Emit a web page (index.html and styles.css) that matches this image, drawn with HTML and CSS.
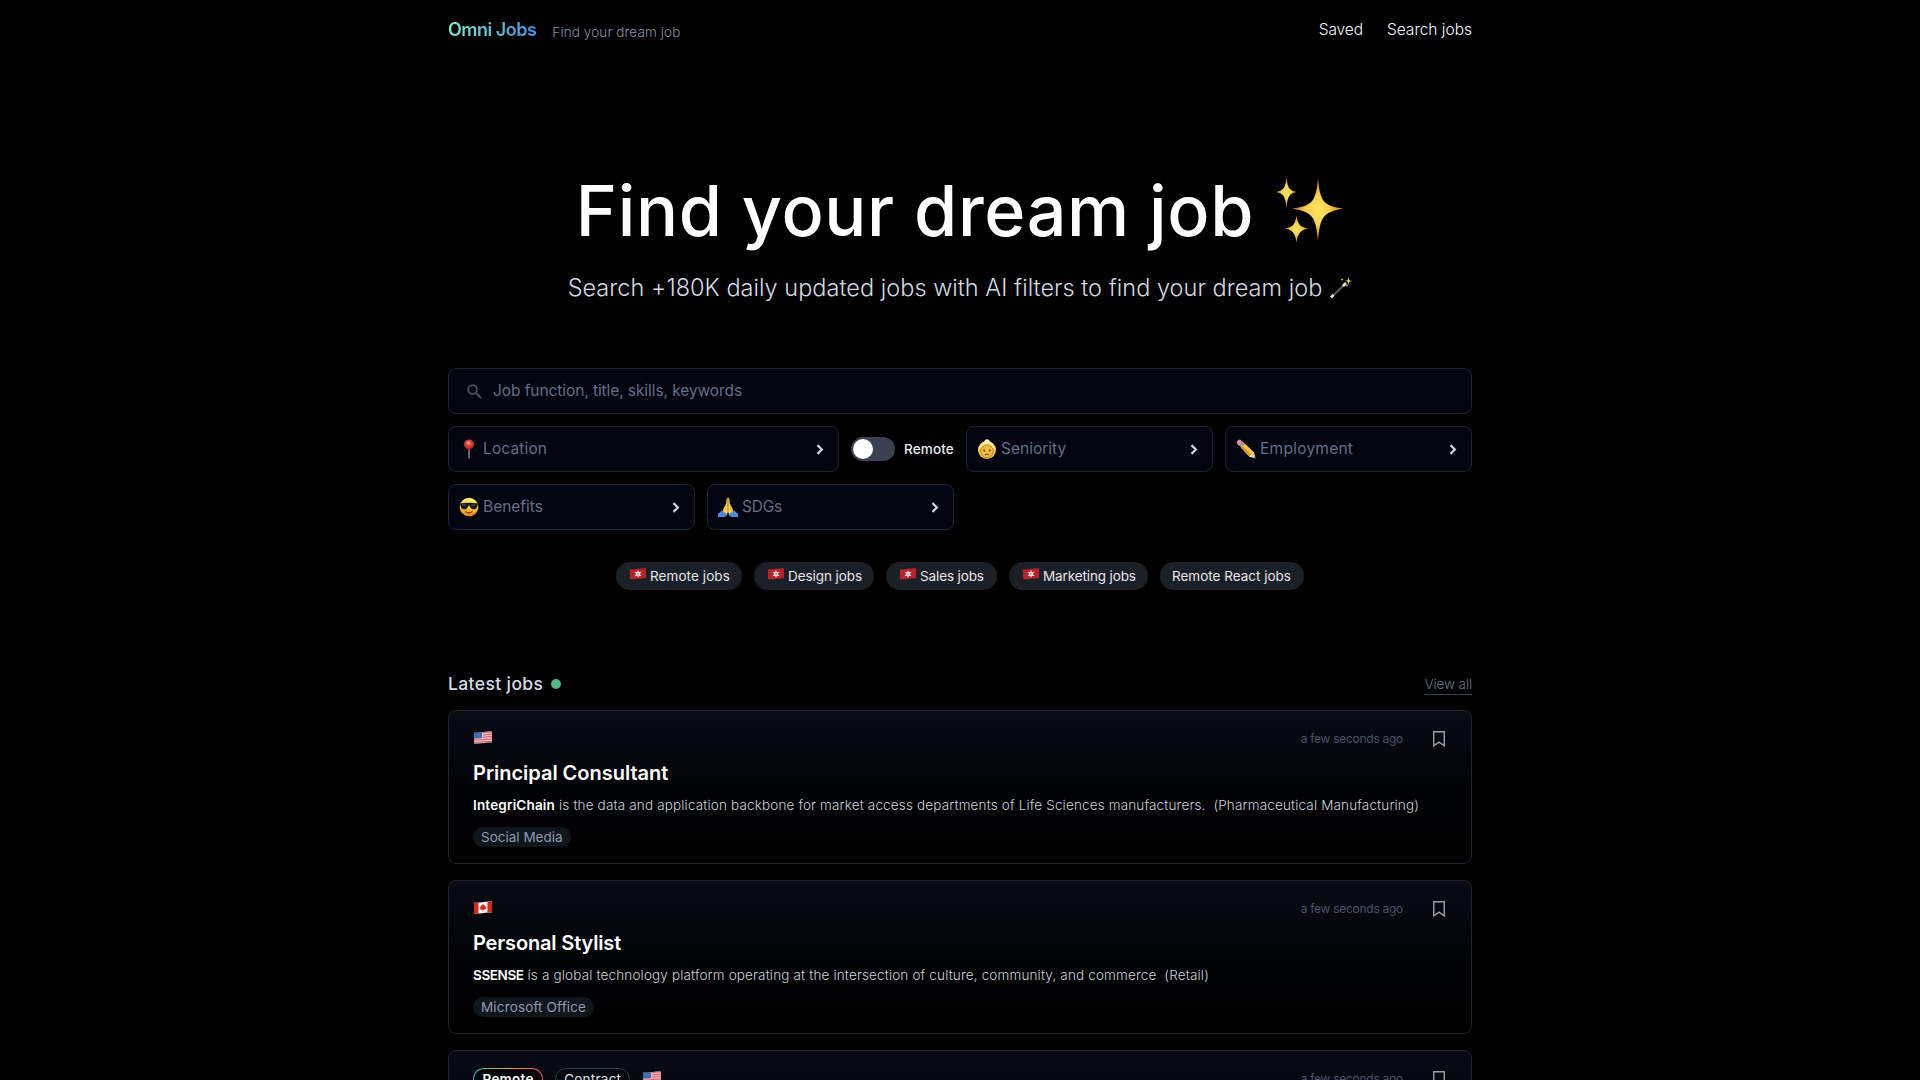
FILE: index.html
```
<!DOCTYPE html>
<html lang="en">
<head>
<meta charset="utf-8">
<title>Omni Jobs</title>
<link rel="stylesheet" href="styles.css">
</head>
<body>
<svg class="defs" width="0" height="0" aria-hidden="true">
  <defs>
    <radialGradient id="gold"><stop offset="0" stop-color="#ffe45c"/><stop offset=".45" stop-color="#f9d253"/><stop offset="1" stop-color="#c9721f"/></radialGradient>
    <linearGradient id="face" x1="0" y1="0" x2="0" y2="1"><stop offset="0" stop-color="#fff06a"/><stop offset=".55" stop-color="#fbc93c"/><stop offset="1" stop-color="#e8801a"/></linearGradient>
    <radialGradient id="pinhead" cx=".45" cy=".35" r=".65"><stop offset="0" stop-color="#ffb3a6"/><stop offset=".35" stop-color="#e2493f"/><stop offset="1" stop-color="#a81f20"/></radialGradient>
    <linearGradient id="hand" x1="0" y1="0" x2="1" y2="0"><stop offset="0" stop-color="#f7b42c"/><stop offset=".5" stop-color="#ffdf66"/><stop offset="1" stop-color="#f2a82b"/></linearGradient>
  </defs>
  <symbol id="chevron" viewBox="0 0 7 10"><path d="M1.2 1l4 4-4 4" fill="none" stroke="#d1d5db" stroke-width="2"/></symbol>
  <symbol id="bookmark" viewBox="0 0 12 16"><path d="M.75.75h10.5v14l-5.25-3.6-5.25 3.6z" fill="none" stroke="#9ca0ad" stroke-width="1.4"/></symbol>
  <symbol id="check" viewBox="0 0 12 10"><path d="M1 5.5l3.3 3L11 1" fill="none" stroke="#03031f" stroke-width="1.4"/></symbol>
  <symbol id="flag-us" viewBox="0 0 18 13">
    <path d="M0 1.500C5 2.400 9 0 18 .5v11C9 11 5 13.400 0 12.500z" fill="#f0b9bd"/>
    <path d="M9 1.700q4-.9 9-.7M9 4.100q4-.9 9-.7M9 6.400q4-.9 9-.7M0 9q4 .3 9-.4t9-.5M0 11.400q4 .3 9-.5t9-.4" fill="none" stroke="#d0606c" stroke-width="1"/>
    <path d="M0 1.500c3 .5 5.500-.1 8-.5v6c-2.500.4-5 .8-8 .5z" fill="#3c68ae"/>
    <path d="M1 3.300h6M1 5.300h6" stroke="#7f9fd0" stroke-width=".5" stroke-dasharray=".7 .7"/>
  </symbol>
  <symbol id="flag-ca" viewBox="0 0 18 13">
    <path d="M0 1.500C5 2.400 9 0 18 .5v11C9 11 5 13.400 0 12.500z" fill="#f4f4f4"/>
    <path d="M0 1.500q2.200.4 4.500.1v11q-2.300.3-4.500-.1zM13.500.5q2-.2 4.500 0v11q-2.500-.2-4.500 0z" fill="#d5291f"/>
    <path d="M9 2.800l.9 1.500 1-.4-.1 1.600 1.600-.2-.6 1.500.5.600-2.500 1.700-.8.100v1.100h-.4V9.200l-2.900-1.300.6-.8-.8-1.400 1.600 0-.2-1.600 1.200.4z" fill="#e0281e"/>
  </symbol>
  <symbol id="flag-hk" viewBox="0 0 16 12">
    <path d="M0 1.300C5 2 9 0 16 .4v10C9 10.100 5 12 0 11.300z" fill="#b8222b"/>
    <path d="M8 1.900l1 2.400 2.600-.5-1.700 2.200 1.700 2-2.600-.3L8 10l-.9-2.200-2.600.4 1.600-2.200-1.600-2 2.500.3z" fill="#fbe5e5"/>
    <circle cx="8" cy="5.900" r=".7" fill="#c9222c"/>
  </symbol>
</svg>

<div class="page">
  <header class="topbar">
    <div class="brand">
      <a class="logo">Omni Jobs</a>
      <span class="tagline">Find your dream job</span>
    </div>
    <nav class="nav"><a class="nav-saved">Saved</a><a>Search jobs</a></nav>
  </header>

  <section class="hero">
    <h1>Find your dream job
      <svg class="sparkles" viewBox="0 0 68 66" width="68" height="66">
        <path d="M42 1C44 24 47 29 67.500 31.500C47 35 44 40 42 64.500C40 40 37 35 16 31.500C37 29 40 24 42 1z" fill="url(#gold)"/>
        <path d="M10.500 0C11.500 10.500 13 13.500 20.500 15C13 16.500 11.500 20 10.500 31C9.500 20 8 16.500 0 15C8 13.500 9.500 10.500 10.500 0z" fill="url(#gold)"/>
        <path d="M20.500 38C21.500 47 23.500 50 32 51.500C23.500 53.500 21.500 57 20.500 66C19.500 57 17.500 53.500 9 51.500C17.500 50 19.500 47 20.500 38z" fill="url(#gold)"/>
      </svg>
    </h1>
    <p>Search +180K daily updated jobs with AI filters to find your dream job
      <svg viewBox="0 0 22 22" width="22" height="22">
        <path d="M1.500 20L15.500 6.500" stroke="#55565c" stroke-width="2.400"/>
        <path d="M.8 20.600l2.800-2.800M13 9l3-3" stroke="#e4e4e6" stroke-width="2.600"/>
        <path d="M18.500 0l.8 3.200 2.700.8-2.700.8-.8 3.200-.8-3.200L15 4l2.700-.8zM12 1l.4 1.200 1.300.4-1.300.4L12 4.200l-.4-1.200-1.300-.4 1.300-.4zM17 7.200l.4 1.100 1.100.4-1.100.4-.4 1.100-.4-1.100-1.100-.4 1.100-.4z" fill="#e3dc6a"/>
      </svg>
    </p>
  </section>

  <form class="filters">
    <div class="field search">
      <svg viewBox="0 0 15 15" width="15" height="15"><circle cx="5.500" cy="5.500" r="4.400" fill="none" stroke="#4b5260" stroke-width="1.700"/><path d="M8.700 8.700l5.300 5.300" stroke="#4b5260" stroke-width="2"/></svg>
      <span>Job function, title, skills, keywords</span>
    </div>
    <div class="location-row">
      <div class="field">
        <svg class="emoji" viewBox="0 0 20 20"><path d="M10 9v10.500" stroke="#9b8a80" stroke-width="1.400"/><circle cx="10" cy="5.500" r="5" fill="url(#pinhead)"/></svg>
        <span class="label-location">Location</span><svg class="chevron"><use href="#chevron"/></svg>
      </div>
      <div class="toggle"><i></i></div>
      <span class="toggle-label">Remote</span>
    </div>
    <div class="field">
      <svg class="emoji" viewBox="0 0 20 20"><circle cx="10" cy="2.800" r="2.600" fill="#fff3b0"/><circle cx="10" cy="11" r="9" fill="#f5c747"/><path d="M1.500 10C3 4 7 2 10 2s7 2 8.500 8c-2-.5-5-4-8.500-4S3.500 9.500 1.500 10z" fill="#fff0a5"/><ellipse cx="10" cy="12.200" rx="6.200" ry="6.500" fill="#f2bf3e" stroke="#b07a1d" stroke-width=".9"/><path d="M6 11q1.200-1 2.400 0M11.600 11q1.200-1 2.400 0" stroke="#775018" stroke-width=".8" fill="none"/><circle cx="7.300" cy="12" r=".8" fill="#4a3010"/><circle cx="12.700" cy="12" r=".8" fill="#4a3010"/><path d="M8 16q2-1.400 4 0" stroke="#6b3c10" stroke-width="1.100" fill="none"/></svg>
      <span>Seniority</span><svg class="chevron"><use href="#chevron"/></svg>
    </div>
    <div class="field">
      <svg class="emoji" viewBox="0 0 20 20"><path d="M.8 4.500Q.6 1 4 .6l3.200 2.600-3.800 3.600z" fill="#e88c94"/><path d="M3.200 6.500L7 3l1.900 1.600-3.900 3.700z" fill="#8fa3b8"/><path d="M4.800 8.300l4.100-3.800 9.300 9-1.200 3.700-3.800.4z" fill="#f6c53c"/><path d="M4.800 8.300l1.600-1.500 9.200 9-.6 1.300-1.800.5z" fill="#e09a25"/><path d="M13 17.500l5-4.300 1.700 6.500z" fill="#eed1a0"/><path d="M17.600 18.900l1.500-1.400.6 2.200z" fill="#333"/></svg>
      <span class="label-employment">Employment</span><svg class="chevron"><use href="#chevron"/></svg>
    </div>
    <div class="field">
      <svg class="emoji" viewBox="0 0 20 20"><circle cx="10" cy="10" r="9.300" fill="url(#face)"/><path d="M1 6.500q9-1.600 18 0l-.4 1.700c-.5 3.300-2 4.200-4 4.200-2.300 0-3.500-1.500-3.900-3.600h-1.400C8.900 10.900 7.700 12.400 5.400 12.400c-2 0-3.500-.9-4-4.200z" fill="#17191d"/><path d="M3 8h3.500M12.500 8H16" stroke="#5a6068" stroke-width="1"/><path d="M6.500 14.500q3.500 2.600 7 0" stroke="#7a3d0c" stroke-width="1.200" fill="none"/></svg>
      <span>Benefits</span><svg class="chevron"><use href="#chevron"/></svg>
    </div>
    <div class="field">
      <svg class="emoji" viewBox="0 0 20 20"><path d="M9.800.3C8.500 1 8.300 4 8.200 6.500L5 12.500 4.500 16l4 2.500L9.900 15zM10.200.3c1.300.7 1.500 3.700 1.600 6.200L15 12.500l.5 3.500-4 2.500L10.100 15z" fill="url(#hand)"/><path d="M10 1v14.500" stroke="#c98520" stroke-width=".7"/><path d="M3.800 13.500l5 3.500-1.500 2.900H0v-3zM16.200 13.500l-5 3.500 1.500 2.900H20v-3z" fill="#4d8ddb"/></svg>
      <span class="label-sdg">SDGs</span><svg class="chevron"><use href="#chevron"/></svg>
    </div>
  </form>

  <div class="chips">
    <a class="chip chip-remote"><svg><use href="#flag-hk"/></svg>Remote jobs</a>
    <a class="chip chip-design"><svg><use href="#flag-hk"/></svg>Design jobs</a>
    <a class="chip chip-sales"><svg><use href="#flag-hk"/></svg>Sales jobs</a>
    <a class="chip chip-marketing"><svg><use href="#flag-hk"/></svg>Marketing jobs</a>
    <a class="chip chip-react">Remote React jobs</a>
  </div>

  <section class="latest">
    <div class="latest-head"><h2>Latest jobs</h2><i class="dot"></i><a>View all</a></div>
    <article class="job">
      <svg class="visited"><use href="#check"/></svg>
      <div class="meta"><svg class="flag"><use href="#flag-us"/></svg><time>a few seconds ago</time><svg class="bookmark"><use href="#bookmark"/></svg></div>
      <h3>Principal Consultant</h3>
      <p><b class="co-integri">IntegriChain</b>is the data and application backbone for market access departments of Life Sciences manufacturers.&nbsp; (Pharmaceutical Manufacturing)</p>
      <span class="tag">Social Media</span>
    </article>
    <article class="job">
      <svg class="visited"><use href="#check"/></svg>
      <div class="meta"><svg class="flag"><use href="#flag-ca"/></svg><time>a few seconds ago</time><svg class="bookmark"><use href="#bookmark"/></svg></div>
      <h3 class="stylist">Personal Stylist</h3>
      <p><b class="co-ssense">SSENSE</b>is a global technology platform operating at the intersection of culture, community, and commerce&nbsp; (Retail)</p>
      <span class="tag tag-office">Microsoft Office</span>
    </article>
    <article class="job">
      <div class="meta"><span class="badge rainbow">Remote</span><span class="badge">Contract</span><svg class="flag"><use href="#flag-us"/></svg><time>a few seconds ago</time><svg class="bookmark"><use href="#bookmark"/></svg></div>
    </article>
  </section>
</div>
</body>
</html>
```
FILE: styles.css
```
* { box-sizing: border-box; margin: 0; padding: 0; }
html, body { height: 100%; }
body { background: #000; color: #fff; font-family: Inter, "Liberation Sans", sans-serif; overflow: hidden; }
svg { flex: none; display: block; }
.defs { position: absolute; }
.page { width: 1024px; height: 1080px; margin: 0 auto; overflow: hidden; }

.topbar { height: 58px; display: flex; justify-content: space-between; align-items: center; }
.brand { display: flex; align-items: center; gap: 16px; }
.logo { padding-top: 2px; font-size: 18px; line-height: 24px; font-weight: 600; letter-spacing: -.5px; background: linear-gradient(90deg, #81e6c9, #4299e1); -webkit-background-clip: text; background-clip: text; color: transparent; }
.tagline { font-size: 13.5px; line-height: 20px; font-weight: 300; letter-spacing: .12px; color: #8791a6; padding-top: 6px; }
.nav { display: flex; gap: 24px; padding-top: 1px; font-size: 15.5px; font-weight: 300; color: #f7fafc; }
.nav-saved { letter-spacing: -.1px; }

.hero { display: flex; flex-direction: column; align-items: center; padding-top: 117px; }
.hero h1 { height: 72px; display: flex; align-items: center; gap: 22px; font-size: 70px; line-height: 72px; font-weight: 500; letter-spacing: .62px; }
.hero h1 svg { margin-top: -2px; }
.hero p { height: 36px; margin-top: 23px; display: flex; align-items: center; gap: 8px; font-size: 23.5px; line-height: 36px; font-weight: 300; letter-spacing: .02px; color: #d3d8e0; white-space: nowrap; }

.filters { margin-top: 62px; display: grid; grid-template-columns: repeat(4, 1fr); gap: 12px; color: #647087; font-size: 15.5px; }
.field { height: 46px; flex: 1; display: flex; align-items: center; gap: 4px; padding: 0 14px 0 10px; border: 1px solid #1e2537; border-radius: 8px; background: #02040f; }
.field span { flex: 1; padding-bottom: 1px; }
.search { grid-column: 1 / -1; padding-left: 18px; gap: 11px; letter-spacing: -.08px; }
.emoji { width: 20px; height: 20px; margin-bottom: 1px; }
.chevron { width: 8px; height: 11px; }
.label-location { letter-spacing: .14px; }
.label-employment { letter-spacing: .25px; }
.label-sdg { letter-spacing: -.25px; }
.location-row { grid-column: span 2; display: flex; align-items: center; }
.toggle { width: 44px; height: 24px; margin: 0 9px 0 12px; padding: 2px; border-radius: 12px; background: #3a4150; }
.toggle i { display: block; width: 20px; height: 20px; border-radius: 50%; background: #fff; }
.toggle-label { width: 50px; font-size: 13.5px; font-weight: 500; letter-spacing: .15px; color: #e8ecf2; }

.chips { margin-top: 32px; display: flex; justify-content: center; gap: 12px; }
.chip { height: 28px; display: flex; align-items: center; padding: 0 12px 0 14px; border-radius: 14px; background: #1b2026; color: #e2e6ec; font-size: 13.5px; line-height: 28px; white-space: nowrap; }
.chip svg { width: 16px; height: 12px; margin: 0 4px 4px 0; }
.chip-remote { width: 126px; letter-spacing: .08px; }
.chip-design { width: 120px; letter-spacing: -.08px; }
.chip-sales { width: 111px; letter-spacing: -.12px; }
.chip-marketing { width: 139px; letter-spacing: -.12px; }
.chip-react { width: 144px; padding-left: 12px; }

.latest { margin-top: 82px; }
.latest-head { height: 24px; margin-bottom: 14px; display: flex; align-items: center; }
.latest-head h2 { font-size: 17.5px; line-height: 24px; font-weight: 500; letter-spacing: .38px; color: #d5dce8; }
.dot { width: 10px; height: 10px; margin-left: 8px; border-radius: 50%; background: #55b685; }
.latest-head a { margin-left: auto; font-size: 13.5px; line-height: 20px; font-weight: 300; letter-spacing: -.1px; color: #6c7890; border-bottom: 1px solid #36445a; }

.job { position: relative; height: 154px; margin-bottom: 16px; padding: 16px 26px 16px 24px; border: 1px solid #22252d; border-radius: 8px; background: linear-gradient(#080b14, #010204 60%, #000); }
.visited { position: absolute; left: 8px; top: 55px; width: 12px; height: 10px; }
.meta { height: 24px; display: flex; align-items: center; }
.flag { width: 18px; height: 13px; margin: 0 0 3px 1px; }
.meta time { margin: 0 0 2px auto; font-size: 12px; letter-spacing: -.28px; color: #4a5469; }
.bookmark { width: 12px; height: 16px; margin-left: 30px; }
.job h3 { margin-top: 8px; font-size: 20px; line-height: 28px; font-weight: 600; letter-spacing: -.02px; }
.job h3.stylist { letter-spacing: -.15px; }
.job p { margin-top: 8px; font-size: 13.5px; line-height: 20px; font-weight: 300; letter-spacing: .156px; color: #cdd1d9; white-space: nowrap; }
.job b { font-weight: 600; color: #fff; margin-right: 4px; }
.co-integri { letter-spacing: .18px; }
.co-ssense { letter-spacing: -.4px; }
.tag { display: table; height: 20px; margin-top: 12px; padding: 0 8px; border-radius: 10px; background: #10171c; color: #8f9ab0; font-size: 13.5px; line-height: 20px; }
.tag-office { letter-spacing: .15px; }
.badge { height: 22px; padding: 0 8px; margin-right: 12px; border: 1px solid #333945; border-radius: 11px; font-size: 13.5px; line-height: 20px; letter-spacing: .25px; color: #dfe3ea; }
.rainbow { font-weight: 600; color: #fff; padding: 0 8.5px; border-color: transparent; background: linear-gradient(#000, #000) padding-box, linear-gradient(90deg, #3fa3c4, #6cc070 25%, #e6a13a 55%, #e3427c) border-box; }
```
